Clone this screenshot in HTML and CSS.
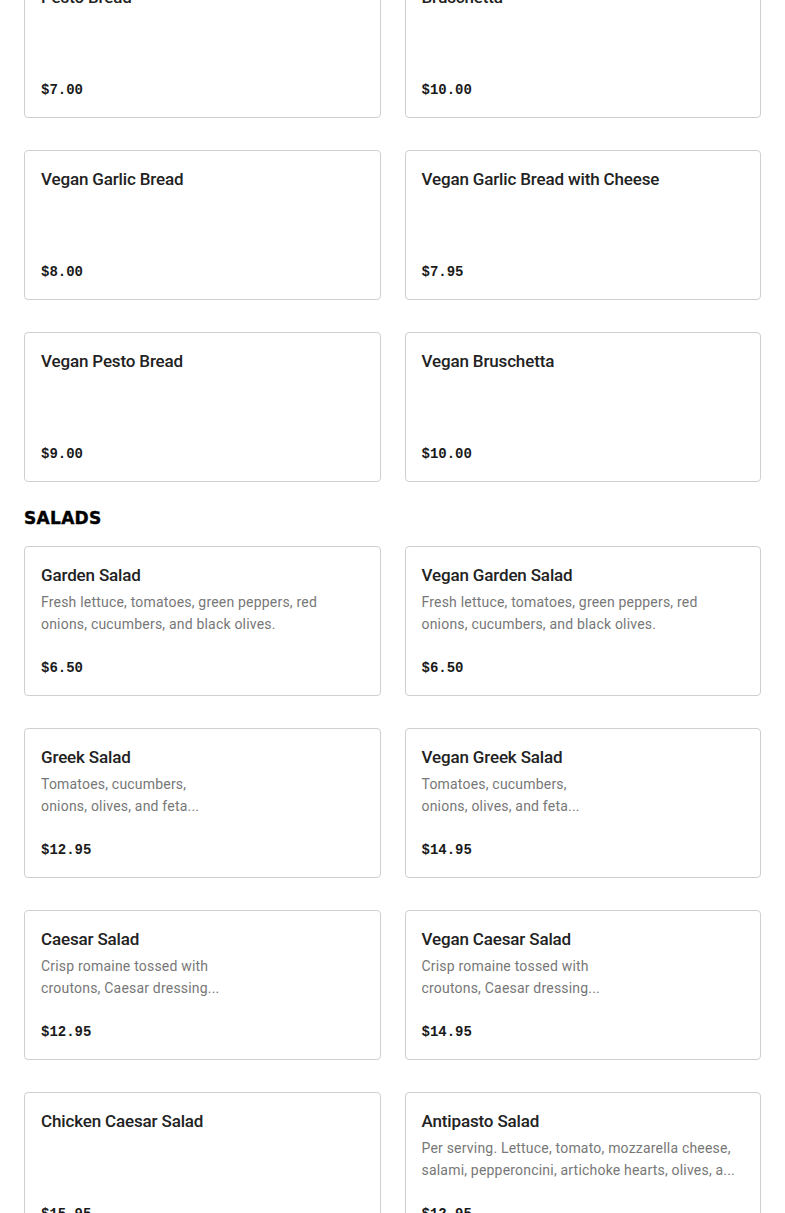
FILE: index.html
```html
<!DOCTYPE html>
<html>
<head>
<meta charset="utf-8">
<link rel="stylesheet" href="styles.css">
</head>
<body>
<main class="menu">
  <section class="section section-scrolled">
    <div class="grid">
      <div class="card"><div class="title">Pesto Bread</div><div class="price">$7.00</div></div>
      <div class="card"><div class="title">Bruschetta</div><div class="price">$10.00</div></div>
      <div class="card"><div class="title">Vegan Garlic Bread</div><div class="price">$8.00</div></div>
      <div class="card"><div class="title">Vegan Garlic Bread with Cheese</div><div class="price">$7.95</div></div>
      <div class="card"><div class="title">Vegan Pesto Bread</div><div class="price">$9.00</div></div>
      <div class="card"><div class="title">Vegan Bruschetta</div><div class="price">$10.00</div></div>
    </div>
  </section>
  <section class="section">
    <h2 class="section-title">SALADS</h2>
    <div class="grid">
      <div class="card"><div class="title">Garden Salad</div><div class="desc">Fresh lettuce, tomatoes, green peppers, red<br>onions, cucumbers, and black olives.</div><div class="price">$6.50</div></div>
      <div class="card"><div class="title">Vegan Garden Salad</div><div class="desc">Fresh lettuce, tomatoes, green peppers, red<br>onions, cucumbers, and black olives.</div><div class="price">$6.50</div></div>
      <div class="card"><div class="title">Greek Salad</div><div class="desc">Tomatoes, cucumbers,<br>onions, olives, and feta...</div><div class="price">$12.95</div></div>
      <div class="card"><div class="title">Vegan Greek Salad</div><div class="desc">Tomatoes, cucumbers,<br>onions, olives, and feta...</div><div class="price">$14.95</div></div>
      <div class="card"><div class="title">Caesar Salad</div><div class="desc">Crisp romaine tossed with<br>croutons, Caesar dressing...</div><div class="price">$12.95</div></div>
      <div class="card"><div class="title">Vegan Caesar Salad</div><div class="desc">Crisp romaine tossed with<br>croutons, Caesar dressing...</div><div class="price">$14.95</div></div>
      <div class="card"><div class="title">Chicken Caesar Salad</div><div class="price">$15.95</div></div>
      <div class="card"><div class="title">Antipasto Salad</div><div class="desc">Per serving. Lettuce, tomato, mozzarella cheese,<br>salami, pepperoncini, artichoke hearts, olives, a...</div><div class="price">$12.95</div></div>
    </div>
  </section>
</main>
</body>
</html>
```

FILE: styles.css
```css
html, body {
  margin: 0;
  padding: 0;
  background: #fff;
}
body {
  font-family: "Roboto", "Liberation Sans", sans-serif;
  color: #222;
  overflow: hidden;
}
.menu {
  padding: 0 24px;
}
.section-scrolled {
  margin-top: -32px;
}
.section-title {
  margin: 24px 0 16px;
  font-family: "DejaVu Sans", sans-serif;
  font-weight: 700;
  font-size: 17px;
  line-height: 24px;
  letter-spacing: 0.3px;
  color: #000;
  -webkit-text-stroke: 0.4px #000;
}
.grid {
  display: grid;
  grid-template-columns: 1fr 1fr;
  column-gap: 24px;
  row-gap: 32px;
}
.card {
  box-sizing: border-box;
  height: 150px;
  border: 1px solid #cfcfcf;
  border-radius: 4px;
  padding: 16px;
  display: flex;
  flex-direction: column;
  overflow: hidden;
}
.title {
  font-size: 17px;
  line-height: 24px;
  font-weight: 500;
  letter-spacing: -0.15px;
  color: #222;
}
.desc {
  margin-top: 4px;
  font-size: 14px;
  line-height: 22px;
  letter-spacing: 0.2px;
  color: #777;
  white-space: nowrap;
}
.price {
  margin-top: auto;
  font-family: "Liberation Mono", monospace;
  font-weight: 700;
  font-size: 14px;
  line-height: 22px;
  color: #1a1a1a;
}
```
